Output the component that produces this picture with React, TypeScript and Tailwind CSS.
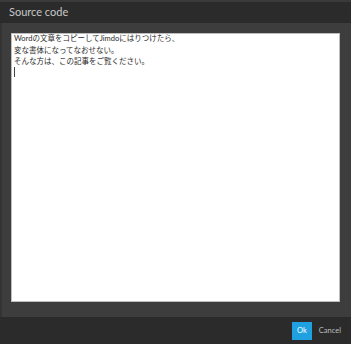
export default function App() {
  return (
    <div className="flex h-[344px] w-[351px] flex-col bg-[#3d3d3d] font-['Lato','Noto_Sans_CJK_JP',sans-serif]">
      <div className="h-[2px] bg-[#3a3a3a]" />
      <div className="flex h-[21px] items-center bg-[#2b2b2b] pl-[9px] text-[11px] text-[#c8c8c8]">Source code</div>
      <div className="flex flex-1 border-l-[2px] border-[#333] pt-[10px] pr-[11px] pb-[15px] pl-[9px]">
        <div className="flex-1 border border-[#bdbdbd] bg-white px-[2px] text-[7.5px] leading-[11.5px] text-[#2a2a2a]">
          <div className="mt-[-1px]">Wordの文章をコピーしてJimdoにはりつけたら、</div>
          <div>変な書体になってなおせない。</div>
          <div>そんな方は、この記事をご覧ください。</div>
          <div className="mt-[-1px] h-[10px] w-[1px] bg-[#444]" />
        </div>
      </div>
      <div className="flex h-[27px] items-center justify-end gap-[7px] bg-[#2b2b2b] pr-[10px]">
        <button className="flex h-[18px] w-[20px] items-center justify-center bg-[#1fa0e0] text-[7.5px] text-white">Ok</button>
        <span className="text-[7.5px] text-[#bdbdbd]">Cancel</span>
      </div>
    </div>
  )
}
